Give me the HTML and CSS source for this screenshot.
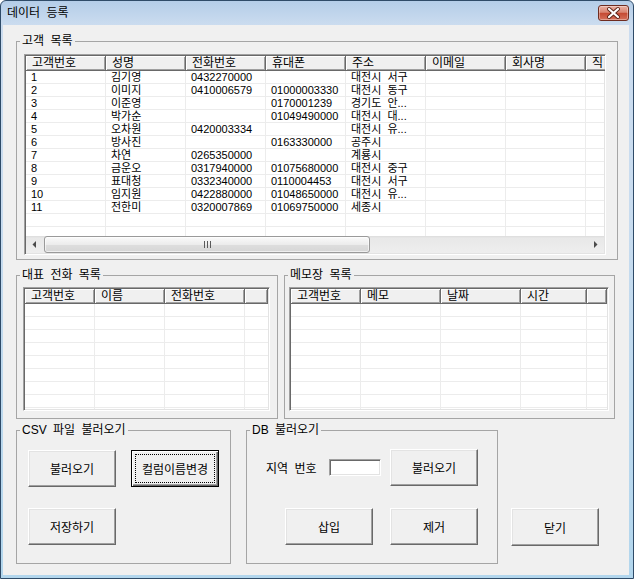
FILE: index.html
```html
<!DOCTYPE html>
<html lang="ko">
<head>
<meta charset="utf-8">
<title>데이터 등록</title>
<link rel="stylesheet" href="styles.css">
</head>
<body>
<div class="window">
  <div class="titlebar">
    <span class="title">데이터 등록</span>
    <span class="close">
      <svg width="29" height="14" viewBox="0 0 29 14">
        <path d="M10 3 L19 11 M19 3 L10 11" stroke="#5b2418" stroke-width="4" stroke-linecap="round"/>
        <path d="M10 3 L19 11 M19 3 L10 11" stroke="#ffffff" stroke-width="2.2" stroke-linecap="round"/>
      </svg>
    </span>
  </div>
  <div class="client">
    <fieldset class="group g1">
      <legend>고객 목록</legend>
      <div class="lv lv1">
        <div class="lv-head">
          <span class="hc">고객번호</span><span class="hc">성명</span><span class="hc">전화번호</span><span class="hc">휴대폰</span><span class="hc">주소</span><span class="hc">이메일</span><span class="hc">회사명</span><span class="hc">직</span>
        </div>
        <div class="lv-body">
          <div class="row"><span>1</span><span>김기영</span><span>0432270000</span><span></span><span>대전시 서구</span></div>
          <div class="row"><span>2</span><span>이미지</span><span>0410006579</span><span>01000003330</span><span>대전시 동구</span></div>
          <div class="row"><span>3</span><span>이준영</span><span></span><span>0170001239</span><span>경기도 안...</span></div>
          <div class="row"><span>4</span><span>박가순</span><span></span><span>01049490000</span><span>대전시 대...</span></div>
          <div class="row"><span>5</span><span>오차원</span><span>0420003334</span><span></span><span>대전시 유...</span></div>
          <div class="row"><span>6</span><span>방사진</span><span></span><span>0163330000</span><span>공주시</span></div>
          <div class="row"><span>7</span><span>차연</span><span>0265350000</span><span></span><span>계룡시</span></div>
          <div class="row"><span>8</span><span>금운오</span><span>0317940000</span><span>01075680000</span><span>대전시 중구</span></div>
          <div class="row"><span>9</span><span>표대청</span><span>0332340000</span><span>0110004453</span><span>대전시 서구</span></div>
          <div class="row"><span>10</span><span>임지원</span><span>0422880000</span><span>01048650000</span><span>대전시 유...</span></div>
          <div class="row"><span>11</span><span>전한미</span><span>0320007869</span><span>01069750000</span><span>세종시</span></div>
        </div>
        <div class="hscroll">
          <span class="sb-btn"><svg width="5" height="7" viewBox="0 0 5 7"><polygon points="4,0 4,7 0.5,3.5" fill="#4a4a4a"/></svg></span>
          <span class="sb-track">
            <span class="sb-thumb">
              <svg width="7" height="7" viewBox="0 0 7 7"><path d="M0.5 0 V7 M3.5 0 V7 M6.5 0 V7" stroke="#5a5a5a" stroke-width="1"/></svg>
            </span>
          </span>
          <span class="sb-btn"><svg width="5" height="7" viewBox="0 0 5 7"><polygon points="1,0 1,7 4.5,3.5" fill="#4a4a4a"/></svg></span>
        </div>
      </div>
    </fieldset>

    <div class="row2">
      <fieldset class="group g2">
        <legend>대표 전화 목록</legend>
        <div class="lv lv2">
          <div class="lv-head">
            <span class="hc">고객번호</span><span class="hc">이름</span><span class="hc">전화번호</span><span class="hc"></span>
          </div>
          <div class="lv-body"></div>
        </div>
      </fieldset>
      <fieldset class="group g3">
        <legend>메모장 목록</legend>
        <div class="lv lv3">
          <div class="lv-head">
            <span class="hc">고객번호</span><span class="hc">메모</span><span class="hc">날짜</span><span class="hc">시간</span><span class="hc"></span>
          </div>
          <div class="lv-body"></div>
        </div>
      </fieldset>
    </div>

    <div class="row3">
      <fieldset class="group g4">
        <legend>CSV 파일 불러오기</legend>
        <div class="csv-btns">
          <button class="btn">불러오기</button>
          <button class="btn default">컬럼이름변경</button>
          <button class="btn">저장하기</button>
        </div>
      </fieldset>
      <fieldset class="group g5">
        <legend>DB 불러오기</legend>
        <div class="db-a">
          <label class="db-label" for="area">지역 번호</label>
          <input id="area" class="txt" type="text">
          <button class="btn">불러오기</button>
        </div>
        <div class="db-b">
          <button class="btn">삽입</button>
          <button class="btn">제거</button>
        </div>
      </fieldset>
      <button class="btn close-btn">닫기</button>
    </div>
  </div>
</div>
</body>
</html>
```

FILE: styles.css
```css
* { box-sizing: border-box; }

body {
  margin: 0;
  background: #ffffff;
  font-family: "Liberation Sans", "Noto Sans CJK KR", sans-serif;
  font-size: 12px;
  word-spacing: 3px;
  color: #000;
}

.window {
  width: 634px;
  height: 579px;
  border: 1px solid #2f4b68;
  border-radius: 6px 6px 0 0;
  background: linear-gradient(to bottom, #b4cde8 0px, #cbdcef 24px, #c9dcef 200px, #b2d6ed 100%);
  display: flex;
  flex-direction: column;
  overflow: hidden;
}

.titlebar {
  height: 24px;
  flex: none;
  display: flex;
  justify-content: space-between;
  align-items: flex-start;
  padding: 0 4px 0 6px;
}

.title {
  line-height: 25px;
  font-size: 12px;
}

.close {
  margin-top: 4px;
  width: 31px;
  height: 16px;
  border: 1px solid #6f2c20;
  border-radius: 3px;
  background: linear-gradient(to bottom, #eab0a2 0%, #d98471 45%, #c54a33 52%, #d5705a 100%);
  box-shadow: inset 0 0 0 1px rgba(255, 255, 255, 0.35);
  display: flex;
  align-items: center;
  justify-content: center;
}

.client {
  width: 626px;
  height: 550px;
  margin-left: 2px;
  background: #f0f0f0;
  padding: 9px 0 0 13px;
}

fieldset.group {
  margin: 0;
  padding: 0;
  border: 1px solid #a5a5a5;
  min-width: 0;
}

legend {
  padding: 0 2px;
  margin-left: 3px;
  height: 14px;
  line-height: 14px;
  font-size: 12px;
}

.group.g1 { width: 602px; height: 226px; }

/* list view */
.lv {
  background: #fff;
  border: 1px solid;
  border-color: #a0a0a0 #ffffff #ffffff #a0a0a0;
  box-shadow: inset 1px 1px 0 #696969, inset -1px -1px 0 #e3e3e3;
  padding: 1px;
  overflow: hidden;
  display: flex;
  flex-direction: column;
}

.lv-head {
  display: grid;
  height: 15px;
  flex: none;
  background: #f0f0f0;
}

.hc {
  border-right: 1px solid #696969;
  border-bottom: 1px solid #696969;
  box-shadow: inset 1px 1px 0 #ffffff, inset -1px -1px 0 #a0a0a0;
  padding-left: 6px;
  line-height: 14px;
  font-size: 12px;
  white-space: nowrap;
  overflow: hidden;
}

.lv-body {
  flex: 1;
  overflow: hidden;
  background-image: repeating-linear-gradient(to bottom, transparent 0 12px, #ececec 12px 13px);
}

.row {
  display: grid;
  height: 13px;
}

.row > span {
  padding-left: 5px;
  font-size: 11px;
  line-height: 12px;
  white-space: nowrap;
  overflow: hidden;
}

.lv1 {
  width: 582px;
  height: 201px;
  margin: 6px 0 0 7px;
}

.lv1 .lv-head,
.lv1 .row {
  grid-template-columns: repeat(8, 80px);
}

.lv1 .lv-body {
  background-image:
    repeating-linear-gradient(to bottom, transparent 0 12px, #ececec 12px 13px),
    repeating-linear-gradient(to right, transparent 0 79px, #ececec 79px 80px);
}

/* horizontal scrollbar */
.hscroll {
  flex: none;
  height: 17px;
  display: flex;
  background: linear-gradient(to bottom, #dcdcdc 0, #e8e8e8 2px, #eeeeee 100%);
}

.sb-btn {
  width: 17px;
  flex: none;
  display: flex;
  align-items: center;
  justify-content: center;
}

.sb-track {
  flex: 1;
  display: flex;
  padding-left: 1px;
}

.sb-thumb {
  width: 326px;
  height: 17px;
  border: 1px solid #9a9a9a;
  border-radius: 3px;
  background: linear-gradient(to bottom, #fafafa 0%, #ececec 50%, #dedede 51%, #d6d6d6 100%);
  box-shadow: inset 0 0 0 1px rgba(255, 255, 255, 0.6);
  display: flex;
  align-items: center;
  justify-content: center;
}

/* row 2 */
.row2 {
  display: flex;
  gap: 6px;
  margin-top: 8px;
}

.group.g2 { width: 262px; height: 151px; }
.group.g3 { width: 331px; height: 151px; }

.lv2 {
  width: 247px;
  height: 124px;
  margin: 5px 0 0 6px;
}

.lv2 .lv-head { grid-template-columns: 70px 70px 80px 1fr; }

.lv2 .lv-body {
  background-image:
    repeating-linear-gradient(to bottom, transparent 0 12px, #ececec 12px 13px),
    linear-gradient(#ececec, #ececec),
    linear-gradient(#ececec, #ececec),
    linear-gradient(#ececec, #ececec);
  background-size: 100% 100%, 1px 100%, 1px 100%, 1px 100%;
  background-position: 0 0, 69px 0, 139px 0, 219px 0;
  background-repeat: no-repeat;
}

.lv3 {
  width: 320px;
  height: 124px;
  margin: 5px 0 0 4px;
}

.lv3 .lv-head { grid-template-columns: 70px 80px 80px 66px 1fr; }

.lv3 .lv-body {
  background-image:
    repeating-linear-gradient(to bottom, transparent 0 12px, #ececec 12px 13px),
    linear-gradient(#ececec, #ececec),
    linear-gradient(#ececec, #ececec),
    linear-gradient(#ececec, #ececec),
    linear-gradient(#ececec, #ececec);
  background-size: 100% 100%, 1px 100%, 1px 100%, 1px 100%, 1px 100%;
  background-position: 0 0, 69px 0, 149px 0, 229px 0, 295px 0;
  background-repeat: no-repeat;
}

/* row 3 */
.row3 {
  display: flex;
  align-items: flex-start;
  margin-top: 4px;
}

.group.g4 { width: 215px; height: 141px; }
.group.g5 { width: 252px; height: 141px; margin-left: 15px; }

.btn {
  width: 88px;
  height: 37px;
  padding: 0;
  font-family: "Liberation Sans", "Noto Sans CJK KR", sans-serif;
  font-size: 12px;
  word-spacing: 3px;
  color: #000;
  background: #f0f0f0;
  border: 1px solid;
  border-color: #ffffff #696969 #696969 #ffffff;
  box-shadow: inset -1px -1px 0 #a0a0a0, inset 1px 1px 0 #e3e3e3;
  border-radius: 0;
}

.btn.default {
  border-color: #000;
  box-shadow: inset 1px 1px 0 #ffffff, inset -1px -1px 0 #696969, inset -2px -2px 0 #a0a0a0;
  outline: 1px dotted #000;
  outline-offset: -5px;
}

.csv-btns {
  display: grid;
  grid-template-columns: 88px 88px;
  grid-auto-rows: 37px;
  column-gap: 15px;
  row-gap: 21px;
  padding: 13px 0 0 11px;
}

.db-a {
  display: flex;
  align-items: center;
  padding: 12px 0 0 19px;
}

.db-label {
  width: 63px;
  flex: none;
}

.txt {
  width: 52px;
  height: 17px;
  margin: 0 9px 0 0;
  padding: 0 2px;
  background: #fff;
  border: 1px solid;
  border-color: #a0a0a0 #ffffff #ffffff #a0a0a0;
  box-shadow: inset 1px 1px 0 #696969, inset -1px -1px 0 #e3e3e3;
  font-size: 12px;
}

.db-b {
  display: flex;
  gap: 17px;
  padding: 22px 0 0 38px;
}

.btn.close-btn {
  margin: 85px 0 0 13px;
  height: 38px;
}
```
